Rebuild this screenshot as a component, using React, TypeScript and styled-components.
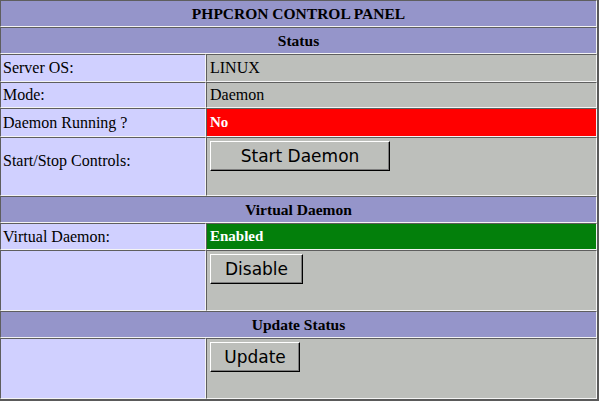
import styled, { createGlobalStyle } from "styled-components";

const GlobalStyle = createGlobalStyle`
  html, body {
    margin: 0;
    padding: 0;
    background: #ffffff;
  }
  * {
    box-sizing: border-box;
  }
`;

type Tone = "label" | "value" | "bad" | "good";

const toneBg: Record<Tone, string> = {
  label: "#d0d0ff",
  value: "#bdbfbb",
  bad: "#ff0000",
  good: "#037f0b",
};

export default function App() {
  return (
    <>
      <GlobalStyle />
      <Panel>
        <HeadCell>PHPCRON CONTROL PANEL</HeadCell>

        <HeadCell>Status</HeadCell>
        <Cell $tone="label">Server OS:</Cell>
        <Cell $tone="value">LINUX</Cell>
        <Cell $tone="label">Mode:</Cell>
        <Cell $tone="value">Daemon</Cell>
        <Cell $tone="label">Daemon Running ?</Cell>
        <Cell $tone="bad">No</Cell>
        <Cell $tone="label" $tall>
          Start/Stop Controls:
        </Cell>
        <ControlCell>
          <Button type="button" $width={180}>
            Start Daemon
          </Button>
        </ControlCell>

        <HeadCell>Virtual Daemon</HeadCell>
        <Cell $tone="label">Virtual Daemon:</Cell>
        <Cell $tone="good">Enabled</Cell>
        <Cell $tone="label" $tall />
        <ControlCell>
          <Button type="button" $width={93}>
            Disable
          </Button>
        </ControlCell>

        <HeadCell>Update Status</HeadCell>
        <Cell $tone="label" $tall />
        <ControlCell>
          <Button type="button" $width={90}>
            Update
          </Button>
        </ControlCell>
      </Panel>
    </>
  );
}

const Panel = styled.div`
  display: grid;
  grid-template-columns: 206px 391px;
  grid-template-rows: 27px 27px 28px 26px 29px 59px 27px 27px 61px 27px 61px;
  width: 599px;
  border-right: 2px solid #5a5a5a;
  border-bottom: 2px solid #5a5a5a;
  font-family: "Liberation Serif", "Times New Roman", serif;
`;

const CellBase = styled.div`
  border-top: 1px solid #5e5e5e;
  border-left: 1px solid #5e5e5e;
  border-bottom: 1px solid #f4f4f4;
  border-right: 1px solid #f4f4f4;
  display: flex;
  align-items: center;
  overflow: hidden;
  white-space: nowrap;
`;

const HeadCell = styled(CellBase)`
  grid-column: 1 / span 2;
  justify-content: center;
  padding-top: 1px;
  background: #9595ca;
  color: #000000;
  font-size: 15.5px;
  font-weight: bold;
`;

const Cell = styled(CellBase)<{ $tone: Tone; $tall?: boolean }>`
  background: ${(p) => toneBg[p.$tone]};
  padding: 0 2px ${(p) => (p.$tall ? "12px" : "0")}
    ${(p) => (p.$tone === "label" ? "2px" : "3px")};
  font-size: ${(p) => (p.$tone === "bad" || p.$tone === "good" ? "15px" : "16px")};
  font-weight: ${(p) => (p.$tone === "bad" || p.$tone === "good" ? "bold" : "normal")};
  color: ${(p) => (p.$tone === "bad" || p.$tone === "good" ? "#ffffff" : "#000000")};
`;

const ControlCell = styled(CellBase)`
  align-items: flex-start;
  background: #bdbfbb;
  padding: 3px 3px 0;
`;

const Button = styled.button<{ $width: number }>`
  width: ${(p) => p.$width}px;
  height: 30px;
  margin: 0;
  padding: 0;
  background: #bdbfbb;
  color: #000000;
  font-family: "DejaVu Sans", Verdana, sans-serif;
  font-size: 17px;
  border-top: 1px solid #ffffff;
  border-left: 1px solid #ffffff;
  border-bottom: 1px solid #000000;
  border-right: 1px solid #000000;
  box-shadow: inset -1px -1px 0 #7d7d7d;
  cursor: pointer;
`;
